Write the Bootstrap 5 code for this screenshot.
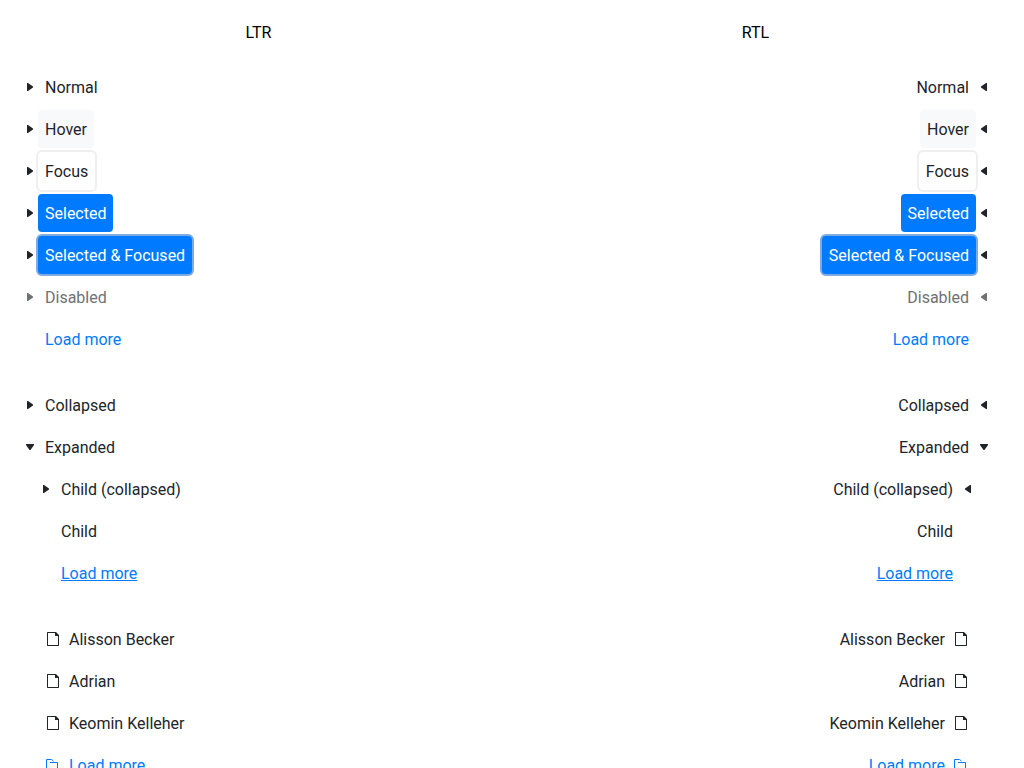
<!DOCTYPE html>
<html lang="en">
<head>
<meta charset="utf-8">
<meta name="viewport" content="width=device-width, initial-scale=1">
<title>TreeView states</title>
<link href="https://cdn.jsdelivr.net/npm/bootstrap@5.3.0/dist/css/bootstrap.min.css" rel="stylesheet">
<script src="https://cdn.jsdelivr.net/npm/bootstrap@5.3.0/dist/js/bootstrap.bundle.min.js" defer></script>
<style>
body { font: 16px/24px Roboto, sans-serif; color: #212529; background: #fff; overflow-x: hidden; scrollbar-width: none; }
.page-grid { padding: 13px 20px 0 10px; }
.page-title { color: #000; padding: 8px 0; }
.tree, .tree ul { list-style: none; margin: 0; padding: 0; }
.tree { padding: 24px 5px 0; }
.page-title + .tree { padding-top: 15px; }
.tree ul { padding-inline-start: 16px; }
.tree-row { height: 38px; margin-bottom: 4px; padding-inline-start: 7px; }
.toggle { width: 16px; height: 16px; color: inherit; }
.toggle svg, .leaf-icon { width: 16px; height: 16px; display: block; }
[dir=rtl] .toggle svg { transform: scaleX(-1); }
.leaf { height: 38px; padding: 0 7px; border-radius: 4px; color: inherit; }
.leaf-text { padding-top: 2px; }
.is-hover { background: #f8f9fa; }
.is-focus { box-shadow: 0 0 0 2px #efefef; }
.is-selected, .is-selected-focus { background: #007bff; color: #fff; }
.is-selected-focus { box-shadow: 0 0 0 2px #7eabe0; }
.is-disabled { color: #6f7173; }
.more { color: #007bff; }
.more-hover { text-decoration: underline !important; }
</style>
</head>
<body>
<main class="container-fluid page-grid">
<div class="row g-0" id="columns"></div>
</main>
<script>
const arrow = d => `<svg viewBox="0 0 16 16" fill="currentColor" aria-hidden="true"><path d="${d}"/></svg>`;
const RIGHT = arrow('M5 4h1l5 3.5v1L6 12H5z'), DOWN = arrow('M4 5h8v1l-3.500 5h-1L4 6z');
const icon = p => `<svg class="leaf-icon flex-shrink-0" viewBox="0 0 16 16" fill="currentColor" aria-hidden="true">${p}</svg>`;
const FILE = icon('<path fill-rule="evenodd" d="M2.500 1H11l3 3v10.500l-.5.5h-11l-.5-.5v-13zM3 2v12h10V5h-3V2z"/>');
const FOLDER = icon('<path fill="none" stroke="currentColor" d="M5 5.500h7.500v8h-11v-11h5l2 1.500"/>');
const toggle = t => t ? `<button type="button" class="toggle border-0 bg-transparent p-0 flex-shrink-0" aria-label="Toggle">${t}</button>` : '<span class="toggle flex-shrink-0"></span>';
const row = (text, t, cls = '', ic = '', rowCls = '') => {
  const link = cls.includes('more');
  const look = `class="leaf d-inline-flex align-items-center gap-2 text-decoration-none text-nowrap ${cls}"`;
  return `<div class="tree-row d-flex align-items-center ${rowCls}">${toggle(t)}${link ? `<a href="#" ${look}>` : `<span ${look}>`}${ic}<span class="leaf-text">${text}</span>${link ? '</a>' : '</span>'}</div>`;
};
const li = (...a) => `<li>${row(...a)}</li>`;
const trees = `
<ul class="tree">${li('Normal', RIGHT)}${li('Hover', RIGHT, 'is-hover')}${li('Focus', RIGHT, 'is-focus')}${li('Selected', RIGHT, 'is-selected')}${li('Selected &amp; Focused', RIGHT, 'is-selected-focus')}${li('Disabled', RIGHT, '', '', 'is-disabled')}${li('Load more', '', 'more')}</ul>
<ul class="tree">${li('Collapsed', RIGHT)}<li>${row('Expanded', DOWN)}<ul>${li('Child (collapsed)', RIGHT)}${li('Child', '')}${li('Load more', '', 'more more-hover')}</ul></li></ul>
<ul class="tree">${li('Alisson Becker', '', '', FILE)}${li('Adrian', '', '', FILE)}${li('Keomin Kelleher', '', '', FILE)}${li('Load more', '', 'more', FOLDER)}</ul>`;
document.getElementById('columns').innerHTML = ['ltr', 'rtl'].map(d => `<section class="col-6" dir="${d}"><div class="page-title text-center">${d.toUpperCase()}</div>${trees}</section>`).join('');
</script>
</body>
</html>
